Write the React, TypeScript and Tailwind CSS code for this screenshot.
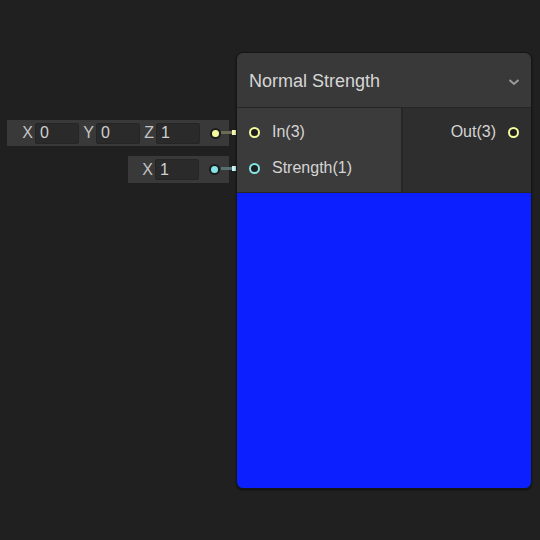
import React from "react";

const font = { fontFamily: '"Liberation Sans", Arial, sans-serif' };

function Field({ label, value, labelW }: { label: string; value: string; labelW: string }) {
  return (
    <div className="flex items-center">
      <span className={`${labelW} text-right pr-[2px] text-[16px] text-[#c4c4c4]`}>{label}</span>
      <div className="w-[44px] h-[21px] bg-[#2a2a2a] border border-[#252525] rounded-[2px] flex items-center pl-[4px] text-[16px] text-[#d0d0d0]">
        {value}
      </div>
    </div>
  );
}

function Dot({ color }: { color: string }) {
  return (
    <div className="w-[11px] h-[11px] rounded-full bg-[#1c1c1c] flex items-center justify-center">
      <div className="w-[7px] h-[7px] rounded-full" style={{ background: color }} />
    </div>
  );
}

function Port({ color }: { color: string }) {
  return (
    <div
      className="w-[11px] h-[11px] rounded-full border-2 bg-[#1e1e1e] shrink-0"
      style={{ borderColor: color }}
    />
  );
}

export default function App() {
  const yellow = "#f4fb9c";
  const cyan = "#84e4e7";
  return (
    <div className="relative w-[540px] h-[540px] bg-[#202020] overflow-hidden" style={font}>
      {/* input box row 1 */}
      <div className="absolute left-[7px] top-[120px] w-[222px] h-[26px] bg-[#393939] flex items-center">
        <div className="flex items-center ml-[10px]">
          <Field label="X" value="0" labelW="w-[18px]" />
          <Field label="Y" value="0" labelW="w-[17px]" />
          <Field label="Z" value="1" labelW="w-[16px]" />
        </div>
        <div className="ml-[10px]">
          <Dot color={yellow} />
        </div>
      </div>
      {/* input box row 2 */}
      <div className="absolute left-[128px] top-[156px] w-[101px] h-[27px] bg-[#393939] flex items-center">
        <div className="flex items-center ml-[9px]">
          <Field label="X" value="1" labelW="w-[18px]" />
        </div>
        <div className="ml-[10px]">
          <Dot color={cyan} />
        </div>
      </div>

      {/* wires */}
      <div className="absolute left-[221px] top-[131px] w-[29px] h-[3px] bg-[#6a6b55]" />
      <div className="absolute left-[232px] top-[130px] w-[5px] h-[5px] bg-[#f4f6b0]" />
      <div className="absolute left-[221px] top-[167px] w-[29px] h-[3px] bg-[#587072]" />
      <div className="absolute left-[232px] top-[166px] w-[5px] h-[5px] bg-[#c8f2f3]" />

      {/* node */}
      <div className="absolute left-[236px] top-[52px] w-[296px] h-[437px] rounded-[7px] border border-[#161616] bg-[#232323] overflow-hidden flex flex-col shadow-[0_1px_2px_rgba(0,0,0,0.6)]">
        <div className="h-[54px] bg-[#393939] flex items-center justify-between pl-[12px] pr-[10px] pt-[2px] shrink-0">
          <span className="text-[18px] text-[#d6d6d6]">Normal Strength</span>
          <svg width="14" height="10" viewBox="0 0 14 10" className="mt-[1px]">
            <path d="M2.5 3 L7 7 L11.5 3" stroke="#9a9a9a" strokeWidth="2" fill="none" />
          </svg>
        </div>
        <div className="h-[1px] bg-[#262626] shrink-0" />
        <div className="h-[84px] flex shrink-0">
          <div className="w-[164px] bg-[#3b3b3b] pt-[6px]">
            <div className="h-[36px] flex items-center pl-[12px]">
              <Port color={yellow} />
              <span className="ml-[12px] text-[16px] text-[#d4d4d4]">In(3)</span>
            </div>
            <div className="h-[36px] flex items-center pl-[12px]">
              <Port color={cyan} />
              <span className="ml-[12px] text-[16px] text-[#d4d4d4]">Strength(1)</span>
            </div>
          </div>
          <div className="w-[2px] bg-[#262626]" />
          <div className="flex-1 bg-[#2e2e2e] pt-[6px]">
            <div className="h-[36px] flex items-center justify-end pr-[12px]">
              <span className="mr-[12px] text-[16px] text-[#d4d4d4]">Out(3)</span>
              <Port color={yellow} />
            </div>
          </div>
        </div>
        <div className="h-[1px] bg-[#262626] shrink-0" />
        <div className="flex-1 bg-[#0c1ffe]" />
      </div>
    </div>
  );
}
